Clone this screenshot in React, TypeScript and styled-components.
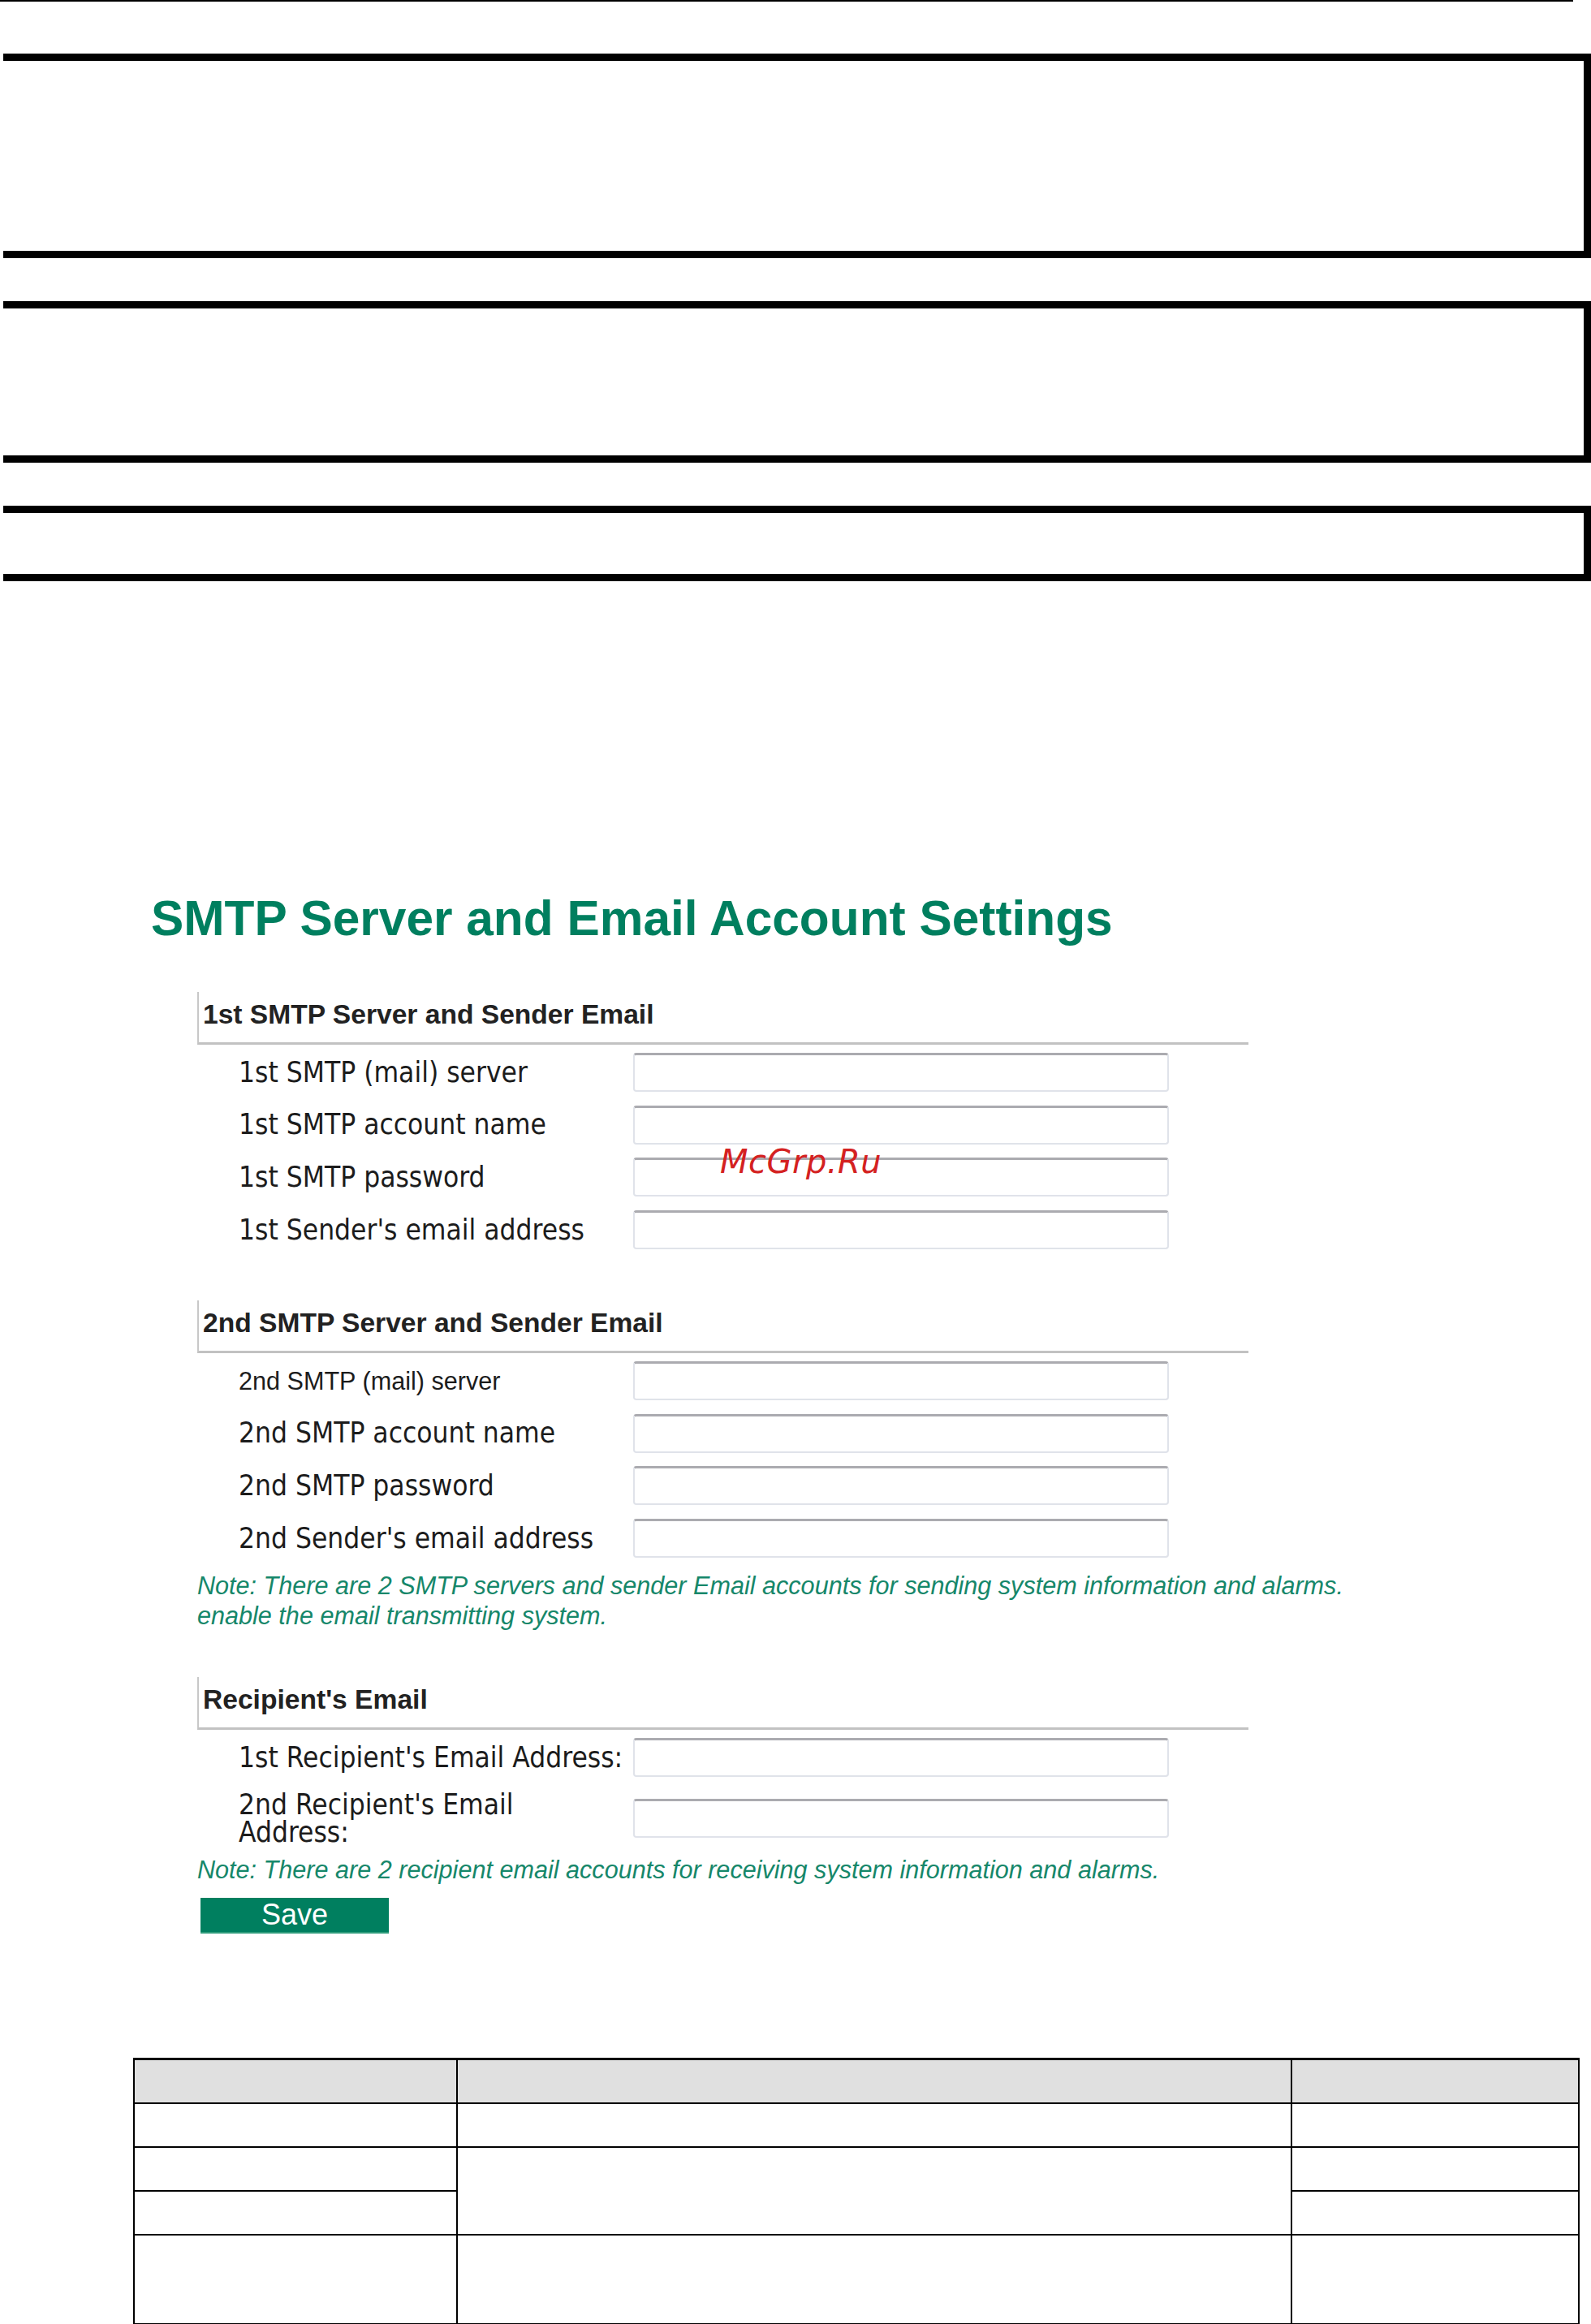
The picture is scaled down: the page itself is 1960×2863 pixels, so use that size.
import React from 'react';
import styled, { createGlobalStyle } from 'styled-components';

const GlobalStyle = createGlobalStyle`
  html, body {
    margin: 0;
    padding: 0;
    background: #ffffff;
  }
  body {
    font-family: "Liberation Sans", Arial, sans-serif;
  }
`;

const Page = styled.div`
  width: 1960px;
  height: 2863px;
  position: relative;
  overflow: hidden;
  display: flex;
  flex-direction: column;
`;

const TopRule = styled.div`
  flex-shrink: 0;
  width: 1938px;
  height: 2px;
  background: #000000;
`;

const Frame = styled.div<{ $height: number; $top: number }>`
  flex-shrink: 0;
  box-sizing: border-box;
  height: ${({ $height }) => $height}px;
  margin: ${({ $top }) => $top}px 0 0 4px;
  border-top: 9px solid #000000;
  border-right: 9px solid #000000;
  border-bottom: 9px solid #000000;
`;

const Settings = styled.section`
  flex-shrink: 0;
  margin: 385px 0 0 184px;
  display: flex;
  flex-direction: column;
  align-items: flex-start;
`;

const Title = styled.h1`
  margin: 0 0 0 2px;
  height: 60px;
  font: bold 60.4px/60px "Liberation Sans", Arial, sans-serif;
  color: #007f5f;
  white-space: nowrap;
`;

const Group = styled.div<{ $top: number }>`
  margin: ${({ $top }) => $top}px 0 0 59px;
  width: 1295px;
`;

const Legend = styled.div`
  box-sizing: border-box;
  height: 65px;
  border-left: 2px solid #c8c8c8;
  border-bottom: 3px solid #c2c2c2;
  padding: 11px 0 0 5px;
  font: bold 33.6px/34px "Liberation Sans", Arial, sans-serif;
  color: #222222;
  white-space: nowrap;
`;

const Rows = styled.div`
  display: grid;
  grid-template-columns: 486px 660px;
  row-gap: 16.67px;
  align-items: center;
  margin-top: 10px;
  padding-left: 51px;
`;

const Label = styled.label<{ $plain?: boolean }>`
  color: #1c1c1c;
  white-space: nowrap;
  font-family: ${({ $plain }) =>
    $plain ? '"Liberation Sans", Arial, sans-serif' : '"DejaVu Sans Condensed", "DejaVu Sans", sans-serif'};
  font-stretch: ${({ $plain }) => ($plain ? 'normal' : 'condensed')};
  font-size: ${({ $plain }) => ($plain ? 30.6 : 35)}px;
  line-height: 34.5px;
`;

const TextBox = styled.input`
  box-sizing: border-box;
  width: 660px;
  height: 48px;
  margin: 0;
  padding: 0 8px;
  background: #ffffff;
  border: 2px solid #e0e3ea;
  border-top: 3px solid #ababb0;
  border-radius: 4px;
  outline: none;
`;

const Note = styled.p<{ $top: number }>`
  margin: ${({ $top }) => $top}px 0 0 59px;
  font: italic 30.6px/37px "Liberation Sans", Arial, sans-serif;
  color: #16876a;
  white-space: nowrap;
`;

const SaveButton = styled.button`
  box-sizing: border-box;
  margin: 16.5px 0 0 63px;
  width: 232px;
  height: 44px;
  padding: 0;
  border: none;
  border-bottom: 2px solid #2f9c7b;
  background: #007f5f;
  color: #ffffff;
  font: 36px/42px "Liberation Sans", Arial, sans-serif;
  cursor: pointer;
`;

const Table = styled.table`
  flex-shrink: 0;
  margin: 153px 0 0 164px;
  width: 1780px;
  border-collapse: collapse;
  table-layout: fixed;
  td, th {
    border: 2px solid #000000;
    padding: 0;
  }
  th {
    background: #e0e0e0;
    border-top-width: 3px;
  }
`;

const Row = styled.tr<{ $height: number }>`
  height: ${({ $height }) => $height}px;
`;

const Watermark = styled.div`
  position: absolute;
  left: 887px;
  top: 1411px;
  font: oblique 40px/40px "DejaVu Sans", sans-serif;
  color: #d42121;
  letter-spacing: 0.5px;
  pointer-events: none;
`;

type Field = { label: React.ReactNode; plain?: boolean };

const groups: { top: number; title: string; fields: Field[] }[] = [
  {
    top: 61,
    title: '1st SMTP Server and Sender Email',
    fields: [
      { label: '1st SMTP (mail) server' },
      { label: '1st SMTP account name' },
      { label: '1st SMTP password' },
      { label: "1st Sender's email address" },
    ],
  },
  {
    top: 63,
    title: '2nd SMTP Server and Sender Email',
    fields: [
      { label: '2nd SMTP (mail) server', plain: true },
      { label: '2nd SMTP account name' },
      { label: '2nd SMTP password' },
      { label: "2nd Sender's email address" },
    ],
  },
];

function FieldGroup({ top, title, fields }: { top: number; title: string; fields: Field[] }) {
  return (
    <Group $top={top}>
      <Legend>{title}</Legend>
      <Rows>
        {fields.map((f, i) => (
          <React.Fragment key={i}>
            <Label $plain={f.plain}>{f.label}</Label>
            <TextBox type="text" />
          </React.Fragment>
        ))}
      </Rows>
    </Group>
  );
}

export default function App(): JSX.Element {
  return (
    <>
      <GlobalStyle />
      <Page>
        <TopRule />
        <Frame $top={64} $height={252} />
        <Frame $top={53} $height={199} />
        <Frame $top={53} $height={93} />

        <Settings>
          <Title>SMTP Server and Email Account Settings</Title>
          {groups.map((g) => (
            <FieldGroup key={g.title} {...g} />
          ))}
          <Note $top={16}>
            Note: There are 2 SMTP servers and sender Email accounts for sending system information and alarms.
            <br />
            enable the email transmitting system.
          </Note>
          <FieldGroup
            top={57}
            title="Recipient's Email"
            fields={[
              { label: "1st Recipient's Email Address:" },
              {
                label: (
                  <>
                    2nd Recipient's Email
                    <br />
                    Address:
                  </>
                ),
              },
            ]}
          />
          <Note $top={10}>
            Note: There are 2 recipient email accounts for receiving system information and alarms.
          </Note>
          <SaveButton>Save</SaveButton>
        </Settings>

        <Table>
          <colgroup>
            <col style={{ width: 398 }} />
            <col style={{ width: 1028 }} />
            <col style={{ width: 354 }} />
          </colgroup>
          <thead>
            <Row $height={54}>
              <th />
              <th />
              <th />
            </Row>
          </thead>
          <tbody>
            <Row $height={54}>
              <td />
              <td />
              <td />
            </Row>
            <Row $height={54}>
              <td />
              <td rowSpan={2} />
              <td />
            </Row>
            <Row $height={54}>
              <td />
              <td />
            </Row>
            <Row $height={110}>
              <td />
              <td />
              <td />
            </Row>
          </tbody>
        </Table>

        <Watermark>McGrp.Ru</Watermark>
      </Page>
    </>
  );
}
